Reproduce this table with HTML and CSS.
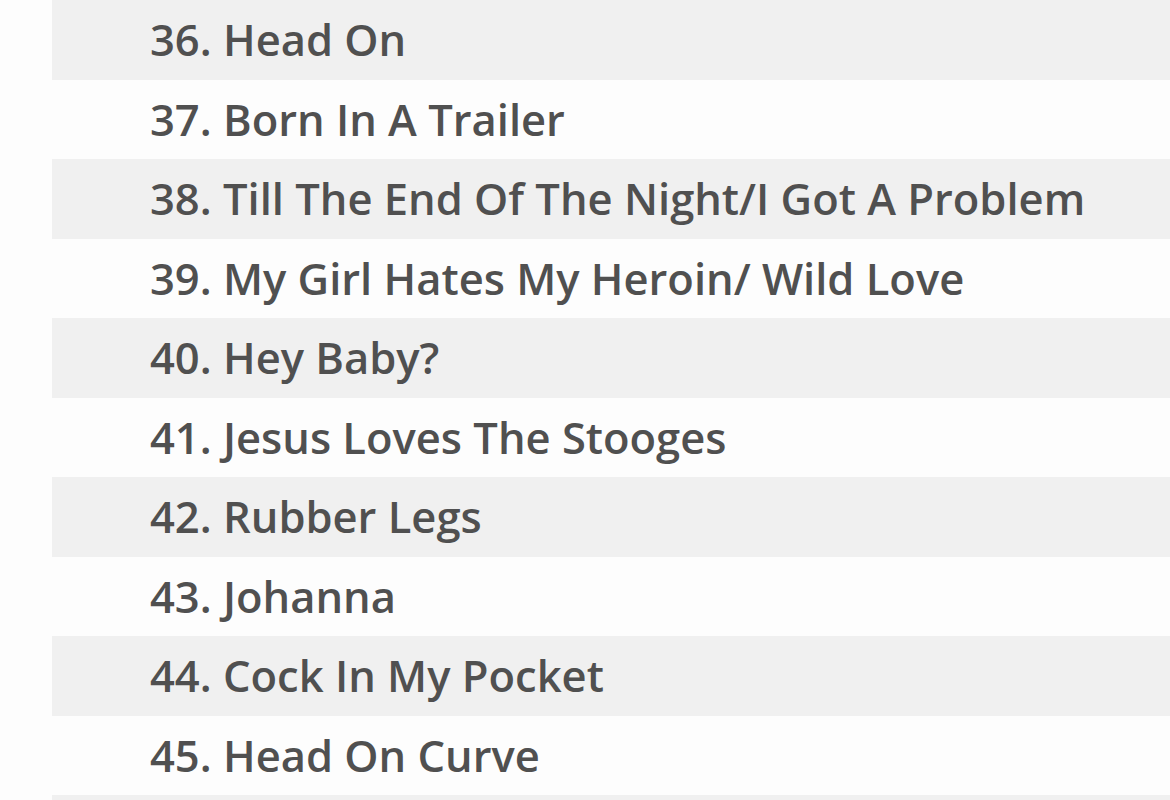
FILE: index.html
```html
<!DOCTYPE html>
<html lang="en">
<head>
  <meta charset="UTF-8">
  <title>Tracklist</title>
  <link rel="stylesheet" href="styles.css">
</head>
<body>
<ol class="tracklist">
  <li class="track">36. Head On</li>
  <li class="track">37. Born In A Trailer</li>
  <li class="track">38. Till The End Of The Night/I Got A Problem</li>
  <li class="track">39. My Girl Hates My Heroin/ Wild Love</li>
  <li class="track">40. Hey Baby?</li>
  <li class="track">41. Jesus Loves The Stooges</li>
  <li class="track">42. Rubber Legs</li>
  <li class="track">43. Johanna</li>
  <li class="track">44. Cock In My Pocket</li>
  <li class="track">45. Head On Curve</li>
  <li class="track track-next"></li>
</ol>
</body>
</html>
```

FILE: styles.css
```css
* { margin: 0; padding: 0; box-sizing: border-box; }
body {
  font-family: 'Open Sans', sans-serif;
  background: #fdfdfd;
  color: #505050;
  overflow: hidden;
}

.tracklist {
  list-style: none;
  margin-left: 52px;
}

.track {
  height: 79.5px;
  line-height: 79.5px;
  padding-left: 98px;
  font-size: 43.5px;
  font-weight: 600;
  white-space: nowrap;
}

.track:nth-child(odd) {
  background: #f0f0f0;
}
```
